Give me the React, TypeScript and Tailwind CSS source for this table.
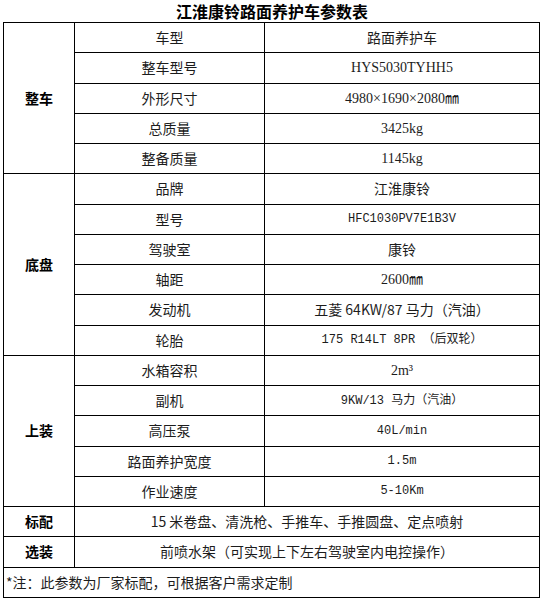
import React from 'react';

const cjk = "font-['Noto_Sans_CJK_SC',sans-serif]";
const serif = "font-['Liberation_Serif','Noto_Sans_CJK_SC',serif]";
const mono = "font-['Liberation_Mono','Noto_Sans_CJK_SC',monospace] text-[12px]";

type Row = { name: string; value: string; font?: string };

const groups: { label: string; rows: Row[] }[] = [
  {
    label: '整车',
    rows: [
      { name: '车型', value: '路面养护车' },
      { name: '整车型号', value: 'HYS5030TYHH5', font: serif },
      { name: '外形尺寸', value: '4980×1690×2080㎜', font: serif },
      { name: '总质量', value: '3425kg', font: serif },
      { name: '整备质量', value: '1145kg', font: serif },
    ],
  },
  {
    label: '底盘',
    rows: [
      { name: '品牌', value: '江淮康铃' },
      { name: '型号', value: 'HFC1030PV7E1B3V', font: mono },
      { name: '驾驶室', value: '康铃' },
      { name: '轴距', value: '2600㎜', font: serif },
      { name: '发动机', value: '五菱 64KW/87 马力（汽油）' },
      { name: '轮胎', value: '175 R14LT 8PR （后双轮）', font: mono },
    ],
  },
  {
    label: '上装',
    rows: [
      { name: '水箱容积', value: '2m³', font: serif },
      { name: '副机', value: '9KW/13 马力（汽油）', font: mono },
      { name: '高压泵', value: '40L/min', font: mono },
      { name: '路面养护宽度', value: '1.5m', font: mono },
      { name: '作业速度', value: '5-10Km', font: mono },
    ],
  },
];

const cell = 'border border-black h-[30.26px] p-0 text-center align-middle';

export default function App() {
  return (
    <div className={`w-[544px] h-[601px] bg-white text-[#1c1c1c] ${cjk}`}>
      <h1 className="h-[22px] pt-[1px] text-center text-[16px] leading-[20px] font-bold text-black">
        江淮康铃路面养护车参数表
      </h1>
      <table className="ml-[3px] w-[537px] border-collapse table-fixed text-[14px]">
        <colgroup>
          <col className="w-[71px]" />
          <col className="w-[190px]" />
          <col />
        </colgroup>
        <tbody>
          {groups.map((g) =>
            g.rows.map((r, i) => (
              <tr key={g.label + r.name}>
                {i === 0 && (
                  <td rowSpan={g.rows.length} className={`${cell} font-bold text-black`}>
                    {g.label}
                  </td>
                )}
                <td className={cell}>{r.name}</td>
                <td className={`${cell} ${r.font ?? ''}`}>{r.value}</td>
              </tr>
            ))
          )}
          <tr>
            <td className={`${cell} font-bold text-black`}>标配</td>
            <td colSpan={2} className={cell}>
              15 米卷盘、清洗枪、手推车、手推圆盘、定点喷射
            </td>
          </tr>
          <tr>
            <td className={`${cell} font-bold text-black`}>选装</td>
            <td colSpan={2} className={cell}>
              前喷水架（可实现上下左右驾驶室内电控操作）
            </td>
          </tr>
          <tr>
            <td colSpan={3} className={`${cell} text-left pl-[2px]`}>
              *注：此参数为厂家标配，可根据客户需求定制
            </td>
          </tr>
        </tbody>
      </table>
    </div>
  );
}
